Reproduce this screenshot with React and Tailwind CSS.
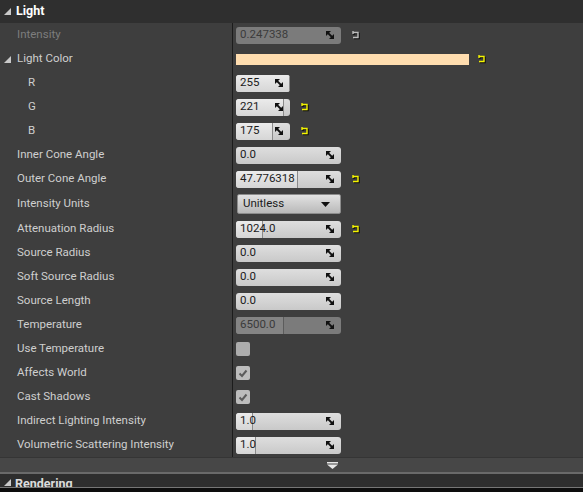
import React from 'react';

const font = { fontFamily: 'Roboto, "Liberation Sans", sans-serif' };

function Tri({ className = '' }) {
  return (
    <svg width="7" height="7" viewBox="0 0 7 7" className={className}>
      <polygon points="0,7 7,7 7,0" fill="#c9c9c9" />
    </svg>
  );
}

function SpinIcon() {
  return (
    <svg width="8" height="8" viewBox="0 0 8 8" className="shrink-0">
      <polygon points="0,0 5,0 0,5" fill="#111" />
      <polygon points="8,3 8,8 3,8" fill="#111" />
      <line x1="1" y1="1" x2="7" y2="7" stroke="#111" strokeWidth="1.8" />
    </svg>
  );
}

function ResetIcon({ grey }) {
  const c = grey ? '#bdbdbd' : '#f4f400';
  return (
    <svg width="10" height="9" viewBox="0 0 10 9" className="shrink-0">
      <g transform="translate(1,1)" stroke="#000" strokeWidth="1.4" fill="none" opacity="0.8">
        <polyline points="2,1.5 7,1.5 7,6.5 2,6.5" />
        <line x1="2" y1="0" x2="2" y2="3" />
      </g>
      <g stroke={c} strokeWidth="1.4" fill="none">
        <polyline points="2,1.5 7,1.5 7,6.5 2,6.5" />
        <line x1="2" y1="0" x2="2" y2="3" />
      </g>
    </svg>
  );
}

function NumBox({ value, width = 105, fill = 0, disabled }) {
  return (
    <div
      className={`relative flex items-center h-[17px] rounded-[3px] overflow-hidden ${
        disabled ? 'bg-[#7b7b7b]' : 'bg-gradient-to-b from-[#dedede] to-[#c9c9c9]'
      }`}
      style={{ width }}
    >
      {fill > 0 && (
        <div
          className={`absolute left-0 top-0 bottom-0 border-r ${
            disabled ? 'bg-[#848484] border-[#5c5c5c]' : 'bg-gradient-to-b from-[#ebebeb] to-[#d6d6d6] border-[#8a8a8a]'
          }`}
          style={{ width: fill }}
        />
      )}
      <span className={`relative pl-[4px] text-[11.5px] flex-1 ${disabled ? 'text-[#3b3b3b]' : 'text-[#1b1b1b]'}`}>
        {value}
      </span>
      <span className="relative pr-[7px] flex items-center">
        <SpinIcon />
      </span>
    </div>
  );
}

function Check({ checked, light }) {
  return (
    <div
      className={`w-[14px] h-[14px] rounded-[2px] flex items-center justify-center ${
        light ? 'bg-[#acacac]' : 'bg-[#bdbdbd]'
      }`}
    >
      {checked && (
        <svg width="10" height="9" viewBox="0 0 10 9">
          <polyline points="1.5,4.5 4,7 8.5,1.5" stroke="#5c5c5c" strokeWidth="2" fill="none" />
        </svg>
      )}
    </div>
  );
}

function Row({ label, indent, tri, dim, tall, children }) {
  return (
    <div className={`grid grid-cols-[232px_1fr] ${tall ? 'h-[26px]' : 'h-[24px]'}`}>
      <div className="flex items-center">
        {tri ? (
          <span className="flex items-center pl-[4px] pr-[6px]">
            <Tri />
          </span>
        ) : null}
        <span
          className={`text-[11.5px] ${dim ? 'text-[#7d7d7d]' : 'text-[#cfcfcf]'} ${
            tri ? '' : indent ? 'pl-[28px]' : 'pl-[17px]'
          }`}
        >
          {label}
        </span>
      </div>
      <div className="border-l border-[#1c1c1c] pl-[3px] flex items-center gap-[10px]">{children}</div>
    </div>
  );
}

export default function App() {
  return (
    <div className="w-[583px] h-[492px] bg-[#0d0d0d] overflow-hidden flex flex-col" style={font}>
      <div className="h-[23px] bg-[#2f2f2f] flex items-center shrink-0">
        <span className="pl-[4px] pr-[5px] flex items-center">
          <Tri />
        </span>
        <span className="text-[12.5px] font-bold text-white">Light</span>
      </div>

      <div className="bg-[#3e3e3e] flex flex-col border-b border-[#353535]">
        <Row label="Intensity" dim>
          <NumBox value="0.247338" disabled />
          <ResetIcon grey />
        </Row>
        <Row label="Light Color" tri>
          <div className="w-[233px] h-[11px] bg-[#ffddaf]" />
          <span className="-ml-[2px]">
            <ResetIcon />
          </span>
        </Row>
        <Row label="R" indent>
          <NumBox value="255" width={54} fill={54} />
        </Row>
        <Row label="G" indent>
          <NumBox value="221" width={54} fill={48} />
          <ResetIcon />
        </Row>
        <Row label="B" indent>
          <NumBox value="175" width={54} fill={37} />
          <ResetIcon />
        </Row>
        <Row label="Inner Cone Angle">
          <NumBox value="0.0" />
        </Row>
        <Row label="Outer Cone Angle">
          <NumBox value="47.776318" fill={62} />
          <ResetIcon />
        </Row>
        <Row label="Intensity Units" tall>
          <div className="w-[104px] h-[20px] ml-[1px] rounded-[2px] bg-gradient-to-b from-[#e2e2e2] to-[#b9b9b9] border border-[#8c8c8c] flex items-center justify-between px-[5px]">
            <span className="text-[11.5px] text-[#1b1b1b]">Unitless</span>
            <svg width="9" height="5" viewBox="0 0 9 5" className="mr-[5px]">
              <polygon points="0,0 9,0 4.5,5" fill="#111" />
            </svg>
          </div>
        </Row>
        <Row label="Attenuation Radius">
          <NumBox value="1024.0" fill={27} />
          <ResetIcon />
        </Row>
        <Row label="Source Radius">
          <NumBox value="0.0" />
        </Row>
        <Row label="Soft Source Radius">
          <NumBox value="0.0" />
        </Row>
        <Row label="Source Length">
          <NumBox value="0.0" />
        </Row>
        <Row label="Temperature">
          <NumBox value="6500.0" fill={48} disabled />
        </Row>
        <Row label="Use Temperature">
          <Check light />
        </Row>
        <Row label="Affects World">
          <Check checked />
        </Row>
        <Row label="Cast Shadows">
          <Check checked />
        </Row>
        <Row label="Indirect Lighting Intensity">
          <NumBox value="1.0" fill={17} />
        </Row>
        <Row label="Volumetric Scattering Intensity">
          <NumBox value="1.0" fill={20} />
        </Row>
      </div>

      <div className="h-[14px] bg-[#474747] flex items-center justify-end pr-[245px] shrink-0">
        <svg width="11" height="7" viewBox="0 0 11 7">
          <rect x="0" y="0" width="11" height="1.5" fill="#e8e8e8" />
          <polygon points="0,2.5 11,2.5 5.5,7" fill="#e8e8e8" />
        </svg>
      </div>
      <div className="h-[2px] bg-[#6a6a6a] shrink-0" />
      <div className="h-[14px] bg-[#2e2e2e] flex items-end overflow-hidden border-b border-[#767676] shrink-0">
        <span className="pl-[4px] pr-[4px] flex items-center pb-[1px]">
          <Tri />
        </span>
        <span className="text-[12.5px] font-bold text-[#dcdcdc] leading-none translate-y-[3px]">Rendering</span>
      </div>
      <div className="flex-1 bg-[#0d0d0d]" />
    </div>
  );
}
